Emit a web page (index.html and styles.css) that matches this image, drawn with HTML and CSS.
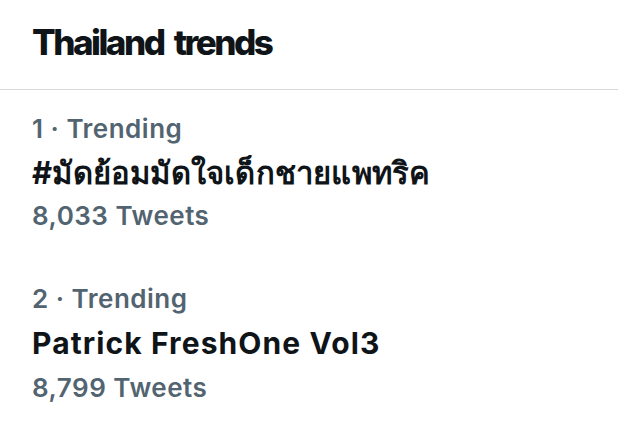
FILE: index.html
```html
<!DOCTYPE html>
<html lang="en">
<head>
<meta charset="utf-8">
<title>Thailand trends</title>
<link rel="stylesheet" href="styles.css">
</head>
<body>
<section class="panel">
  <header class="panel-header">
    <h2 class="panel-title">Thailand trends</h2>
  </header>
  <ul class="trend-list">
    <li class="trend">
      <div class="trend-meta">1 · Trending</div>
      <div class="trend-name trend-name-th" lang="th">#มัดย้อมมัดใจเด็กชายแพทริค</div>
      <div class="trend-count">8,033 Tweets</div>
    </li>
    <li class="trend">
      <div class="trend-meta">2 · Trending</div>
      <div class="trend-name">Patrick FreshOne Vol3</div>
      <div class="trend-count">8,799 Tweets</div>
    </li>
  </ul>
</section>
</body>
</html>
```
FILE: styles.css
```css
html, body {
  margin: 0;
  padding: 0;
  background: #ffffff;
}
body {
  width: 618px;
  height: 445px;
  overflow: hidden;
  font-family: Inter, "Liberation Sans", "Noto Sans", sans-serif;
  color: #0f1419;
}
.panel-header {
  padding: 20px 32px 25px;
  border-bottom: 1px solid #d6dadd;
}
.panel-title {
  margin: 0;
  font-size: 35px;
  line-height: 44px;
  font-weight: 800;
  letter-spacing: -2.5px;
  word-spacing: 5px;
}
.trend-list {
  list-style: none;
  margin: 0;
  padding: 0;
}
.trend {
  padding: 24px 32px 29px;
}
.trend-meta,
.trend-count {
  font-size: 26px;
  line-height: 30px;
  font-weight: 600;
  color: #536471;
  letter-spacing: 0.5px;
}
.trend-name {
  font-size: 30px;
  line-height: 59px;
  font-weight: 700;
  letter-spacing: 1.1px;
}
.trend-name-th {
  font-size: 31px;
  line-height: 57px;
  letter-spacing: 0.2px;
}
```
